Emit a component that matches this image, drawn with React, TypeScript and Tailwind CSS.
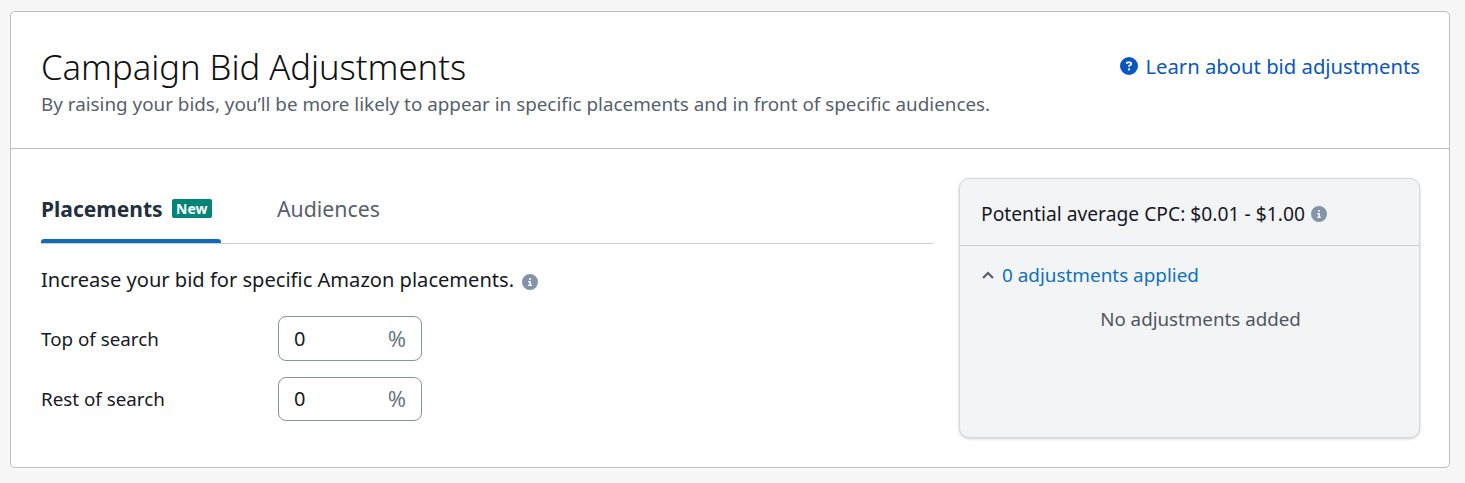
import { FaCircleInfo, FaCircleQuestion } from "react-icons/fa6";

const InfoIcon = () => (
  <FaCircleInfo className="h-4 w-4 shrink-0 text-[#8494a8]" />
);

const BidInput = ({ height }: { height: string }) => (
  <div
    className={`flex ${height} w-[144px] items-center justify-between rounded-lg border border-[#879596] bg-white pl-[15px] pr-[15px] text-[20px]`}
  >
    <span className="text-[#16191f]">0</span>
    <span className="mb-[2px] text-[22px] text-[#6b7785]">%</span>
  </div>
);

export default function App() {
  return (
    <div className="min-h-[483px] bg-[#f7f7f7] px-[10px] pt-[11px] font-['Noto_Sans',sans-serif] text-[18.8px] leading-6 text-[#16191f]">
      <section className="h-[457px] w-[1440px] rounded-[5px] border border-[#bbbfbf] bg-white">
        {/* Header */}
        <header className="flex h-[137px] items-start justify-between border-b border-[#bbbfbf] pl-[30px] pr-[29px] pt-[33px]">
          <div>
            <h1 className="text-[34.6px] leading-[44px] font-light text-[#0f1111]">
              Campaign Bid Adjustments
            </h1>
            <p className="mt-[3px] text-[18.83px] text-[#565f6b]">
              By raising your bids, you’ll be more likely to appear in specific
              placements and in front of specific audiences.
            </p>
          </div>
          <a className="flex items-center gap-[7px] pt-[9px] text-[20.25px] text-[#0b57c0]">
            <FaCircleQuestion className="h-[18px] w-[18px]" />
            Learn about bid adjustments
          </a>
        </header>

        <div className="flex justify-between pl-[30px] pr-[29px] pt-[29px]">
          {/* Left column */}
          <div className="w-[892px]">
            <div className="flex h-[66px] gap-14 border-b border-[#cccccc]">
              <div className="relative flex h-[65px] w-[180px] items-start gap-[9px] pt-[19px]">
                <span className="text-[21px] font-bold text-[#232f3e]">
                  Placements
                </span>
                <span className="mt-[2px] rounded-[2px] bg-[#008577] px-[4.5px] text-[14px] leading-[19px] font-bold text-white">
                  New
                </span>
                <span className="absolute right-0 bottom-0 left-0 h-1 rounded-t-[3px] bg-[#0f6cbd]" />
              </div>
              <span className="pt-[19px] text-[21.3px] text-[#565f6b]">
                Audiences
              </span>
            </div>

            <p className="mt-[24px] flex items-center gap-2 text-[20.08px]">
              Increase your bid for specific Amazon placements.
              <span className="mt-[3px]">
                <InfoIcon />
              </span>
            </p>

            <div className="mt-[24px] flex items-center">
              <span className="w-[237px]">Top of search</span>
              <BidInput height="h-[45px]" />
            </div>
            <div className="mt-[16px] flex items-center">
              <span className="w-[237px]">Rest of search</span>
              <BidInput height="h-[44px]" />
            </div>
          </div>

          {/* Right panel */}
          <aside className="h-[260px] w-[461px] rounded-[10px] border border-[#d5d9d9] bg-[#f3f4f6] shadow-[0_1px_3px_rgba(0,0,0,0.2)]">
            <div className="flex h-[67px] items-center gap-[6px] border-b border-[#cccccc] pl-[21px] pt-[3px] text-[19.25px]">
              Potential average CPC: $0.01 - $1.00
              <InfoIcon />
            </div>
            <div className="flex items-center gap-2 pl-[22px] pt-[17px] text-[18.9px] text-[#0f72ba]">
              <svg viewBox="0 0 12 8" className="h-2 w-3 text-[#565f6b]">
                <path
                  d="M1 7l5-5 5 5"
                  fill="none"
                  stroke="currentColor"
                  strokeWidth="2.2"
                />
              </svg>
              0 adjustments applied
            </div>
            <p className="mt-5 pl-[22px] text-center text-[18.75px] text-[#4f5661]">
              No adjustments added
            </p>
          </aside>
        </div>
      </section>
    </div>
  );
}
